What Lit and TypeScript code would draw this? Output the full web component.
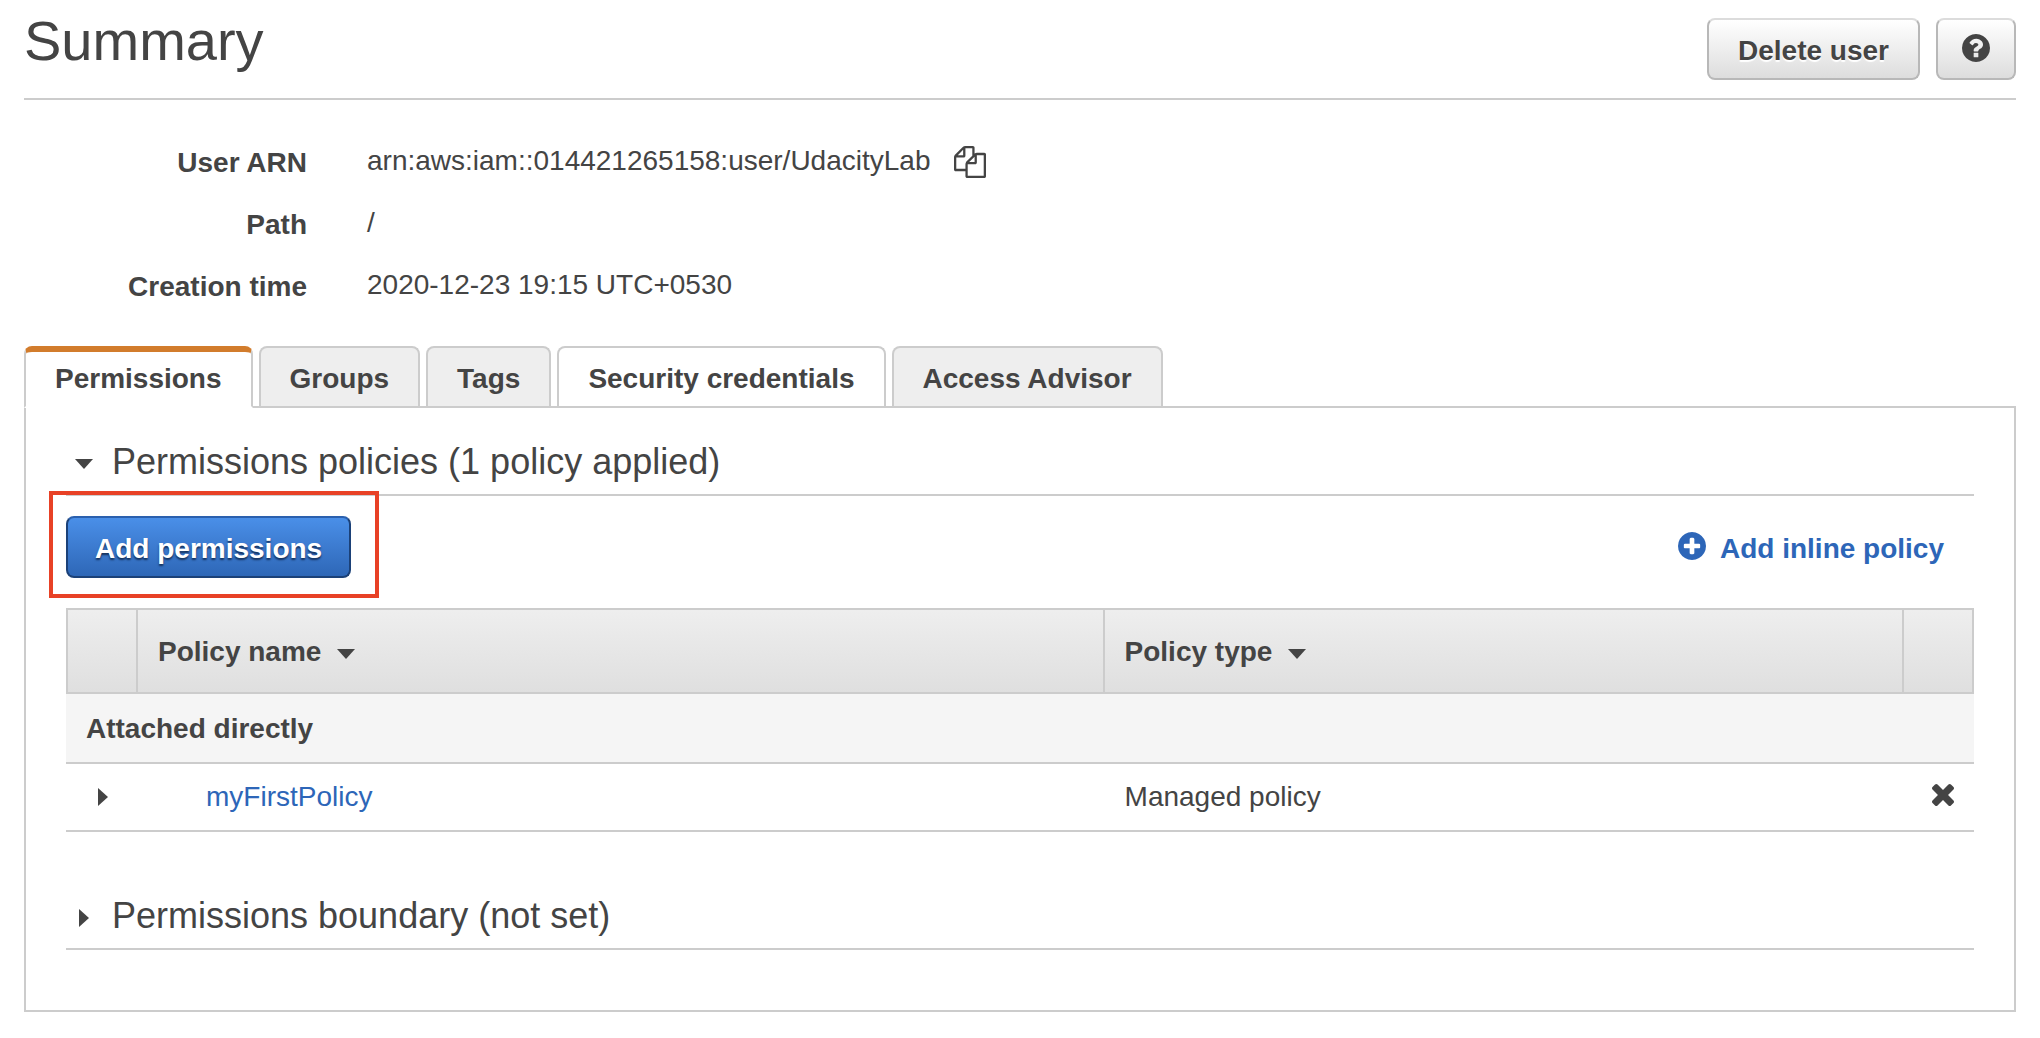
import { LitElement, html, css, svg } from "lit";
import { customElement, property, state } from "lit/decorators.js";
import { classMap } from "lit/directives/class-map.js";

const DISC =
  "q0 209-103 385.500t-279.500 279.500-385.500 103-385.500-103-279.500-279.500-103-385.500 103-385.500 279.500-279.500 385.500-103 385.500 103 279.500 279.500 103 385.500z";

const ICONS: Record<string, { box: string; path: string }> = {
  copy: {
    box: "0 0 1792 1792",
    path: "M1696 384q40 0 68 28t28 68v1216q0 40-28 68t-68 28h-960q-40 0-68-28t-28-68v-288h-544q-40 0-68-28t-28-68v-672q0-40 20-88t48-76l408-408q28-28 76-48t88-20h416q40 0 68 28t28 68v328q68-40 128-40h416zm-544 213l-299 299h299v-299zm-640-384l-299 299h299v-299zm196 647l316-316v-416h-384v416q0 40-28 68t-68 28h-416v640h512v-256q0-40 20-88t48-76zm956 804v-1152h-384v416q0 40-28 68t-68 28h-416v640h896z",
  },
  question: {
    box: "128 128 1536 1536",
    path:
      "M1024 1376v-192q0-14-9-23t-23-9h-192q-14 0-23 9t-9 23v192q0 14 9 23t23 9h192q14 0 23-9t9-23zm256-672q0-88-55.500-163t-138.500-116-170-41q-243 0-371 213-15 24 8 42l132 100q7 6 19 6 16 0 25-12 53-68 86-92 34-24 86-24 48 0 85.500 26t37.500 59q0 38-20 61t-68 45q-63 28-115.500 86.500t-52.500 125.500v36q0 14 9 23t23 9h192q14 0 23-9t9-23q0-19 21.500-49.500t54.500-49.500q32-18 49-28.500t46-35 44.500-48 28-60.500 12.500-81zm384 192" +
      DISC,
  },
  plus: {
    box: "128 128 1536 1536",
    path:
      "M1344 960v-128q0-26-19-45t-45-19h-256v-256q0-26-19-45t-45-19h-128q-26 0-45 19t-19 45v256h-256q-26 0-45 19t-19 45v128q0 26 19 45t45 19h256v256q0 26 19 45t45 19h128q26 0 45-19t19-45v-256h256q26 0 45-19t19-45zm320-64" +
      DISC,
  },
  remove: {
    box: "302 366 1188 1188",
    path: "M1490 1322q0 40-28 68l-136 136q-28 28-68 28t-68-28l-294-294-294 294q-28 28-68 28t-68-28l-136-136q-28-28-28-68t28-68l294-294-294-294q-28-28-28-68t28-68l136-136q28-28 68-28t68 28l294 294 294-294q28-28 68-28t68 28l136 136q28 28 28 68t-28 68l-294 294 294 294q28 28 28 68z",
  },
  down: { box: "0 0 18 18", path: "M0 4h18l-9 10z" },
  right: { box: "0 0 18 18", path: "M4 0v18l10-9z" },
};

const icon = (name: string, size: string) => html`
  <svg class="icon ${size}" viewBox=${ICONS[name].box} aria-hidden="true">
    ${svg`<path d=${ICONS[name].path}></path>`}
  </svg>
`;

const shared = css`
  *,
  *::before {
    box-sizing: border-box;
  }
  button {
    margin: 0;
    padding: 0;
    border: 0;
    background: none;
    font: inherit;
    color: inherit;
    cursor: pointer;
  }
  .icon {
    display: block;
    flex: none;
    fill: currentColor;
  }
  .caret {
    width: 18px;
    height: 18px;
  }
  .cross {
    width: 22px;
    height: 22px;
  }
  .disc {
    width: 28px;
    height: 28px;
  }
  .page {
    width: 32px;
    height: 32px;
  }
`;

@customElement("collapsible-section")
export class CollapsibleSection extends LitElement {
  @property() heading = "";
  @property({ type: Boolean }) open = false;

  static styles = [
    shared,
    css`
      :host {
        display: block;
      }
      .heading {
        margin: 0;
        border-bottom: 2px solid #ccc;
        font-size: 36px;
        font-weight: 400;
        line-height: 42px;
      }
      .toggle {
        display: flex;
        align-items: center;
        gap: 19px;
        width: 100%;
        padding: 9px 9px 11px;
        text-align: left;
      }
      .caret {
        margin-top: 4px;
      }
    `,
  ];

  render() {
    return html`
      <h2 class="heading">
        <button class="toggle" aria-expanded=${this.open} @click=${() => (this.open = !this.open)}>
          ${icon(this.open ? "down" : "right", "caret")}
          <span>${this.heading}</span>
        </button>
      </h2>
      ${this.open ? html`<slot></slot>` : null}
    `;
  }
}

@customElement("policy-table")
export class PolicyTable extends LitElement {
  @property({ attribute: false }) policies: { name: string; type: string }[] = [];

  static styles = [
    shared,
    css`
      :host {
        display: block;
      }
      .table {
        width: 100%;
        table-layout: fixed;
        border-collapse: separate;
        border-spacing: 0;
        text-align: left;
        line-height: 34px;
      }
      .col-expand {
        width: 70px;
      }
      .col-type {
        width: 41.9%;
      }
      .col-remove {
        width: 72px;
      }
      .head {
        height: 86px;
        padding: 2px 20px 0;
        border: 2px solid #ccc;
        border-right-width: 0;
        background: linear-gradient(#eee, #dfdfdf);
        font-weight: 700;
      }
      .head:last-child {
        border-right-width: 2px;
      }
      .sort {
        display: flex;
        align-items: center;
        gap: 16px;
      }
      .sort .caret {
        margin-top: 4px;
      }
      .group {
        height: 70px;
        padding: 2px 20px 0;
        border-bottom: 2px solid #ccc;
        background: #f5f5f5;
        font-weight: 700;
      }
      .cell {
        height: 68px;
        padding: 0 22px;
        border-bottom: 2px solid #ccc;
      }
      .cell.expand {
        padding: 0 28px;
      }
      .cell.name {
        padding-left: 70px;
      }
      .cell.remove .cross {
        margin-left: 8px;
      }
      .link {
        color: #2d66b8;
        text-decoration: none;
      }
    `,
  ];

  render() {
    return html`
      <table class="table">
        <colgroup>
          <col class="col-expand" />
          <col />
          <col class="col-type" />
          <col class="col-remove" />
        </colgroup>
        <thead>
          <tr>
            <th class="head"></th>
            <th class="head" scope="col">
              <button class="sort">Policy name ${icon("down", "caret")}</button>
            </th>
            <th class="head" scope="col">
              <button class="sort">Policy type ${icon("down", "caret")}</button>
            </th>
            <th class="head"></th>
          </tr>
        </thead>
        <tbody>
          <tr>
            <th class="group" colspan="4" scope="rowgroup">Attached directly</th>
          </tr>
          ${this.policies.map(
            (policy) => html`
              <tr>
                <td class="cell expand">
                  <button aria-label="Expand ${policy.name}">${icon("right", "caret")}</button>
                </td>
                <td class="cell name"><a class="link" href="#${policy.name}">${policy.name}</a></td>
                <td class="cell">${policy.type}</td>
                <td class="cell remove">
                  <button aria-label="Detach ${policy.name}">${icon("remove", "cross")}</button>
                </td>
              </tr>
            `,
          )}
        </tbody>
      </table>
    `;
  }
}

@customElement("app-root")
export class AppRoot extends LitElement {
  @state() private selected = "Permissions";

  private tabs = [
    { label: "Permissions" },
    { label: "Groups" },
    { label: "Tags" },
    { label: "Security credentials", highlighted: true },
    { label: "Access Advisor" },
  ];

  private policies = [{ name: "myFirstPolicy", type: "Managed policy" }];

  static styles = [
    shared,
    css`
      :host {
        display: block;
        padding: 0 24px 26px;
        background: #fff;
        color: #444;
        font-family: "Liberation Sans", Arial, Helvetica, sans-serif;
        font-size: 28px;
        line-height: 36px;
      }
      .header {
        display: flex;
        align-items: flex-start;
        justify-content: space-between;
        padding: 18px 0;
        border-bottom: 2px solid #ccc;
      }
      .title {
        margin: 0;
        font-size: 56px;
        font-weight: 400;
        line-height: 46px;
      }
      .actions {
        display: flex;
        gap: 16px;
      }
      .button {
        display: flex;
        align-items: center;
        justify-content: center;
        height: 62px;
        padding: 4px 29px 0;
        border: 2px solid #b8b8b8;
        border-top-color: #dcdcdc;
        border-radius: 8px;
        background: linear-gradient(#fff, #ddd);
        font-weight: 700;
        text-shadow: 0 2px 1px #fff;
      }
      .button.square {
        width: 80px;
        padding: 0 0 2px;
      }
      .button.primary {
        padding: 4px 27px 0;
        border-color: #1b4178;
        border-top-color: #2a60ae;
        background: linear-gradient(#4a8fe8, #2e67b7);
        color: #fff;
        text-shadow: 0 2px 2px #14305a;
      }
      .details {
        display: grid;
        grid-template-columns: 283px 1fr;
        gap: 24px 60px;
        margin: 0;
        padding: 43px 0 41px;
      }
      .term {
        padding-top: 2px;
        font-weight: 700;
        text-align: right;
      }
      .value {
        display: flex;
        gap: 24px;
        margin: 0;
      }
      .copy {
        align-self: center;
      }
      .tabs {
        display: flex;
        gap: 6px;
      }
      .tab {
        height: 60px;
        padding: 4px 29px 0;
        border: 2px solid #ccc;
        border-bottom: 0;
        border-radius: 8px 8px 0 0;
        background: #eee;
        font-weight: 700;
      }
      .tab.highlighted {
        background: #fff;
      }
      .tab.active {
        z-index: 1;
        height: 62px;
        margin-bottom: -2px;
        padding-top: 0;
        border-top: 6px solid #d27c2c;
        border-bottom: 2px solid #fff;
        background: #fff;
      }
      .panel {
        padding: 24px 40px 60px;
        border: 2px solid #ccc;
      }
      .toolbar {
        display: flex;
        align-items: center;
        justify-content: space-between;
        padding: 20px 30px 30px 0;
      }
      .marked {
        position: relative;
      }
      .marked::before {
        content: "";
        position: absolute;
        inset: -25px -28px -20px -17px;
        border: 4px solid #e84126;
        pointer-events: none;
      }
      .inline-policy {
        display: flex;
        align-items: center;
        gap: 14px;
        padding-top: 4px;
        color: #2d66b8;
        font-weight: 700;
        text-decoration: none;
      }
      .inline-policy .disc {
        margin-bottom: 6px;
      }
      .boundary {
        margin-top: 54px;
      }
    `,
  ];

  render() {
    return html`
      <header class="header">
        <h1 class="title">Summary</h1>
        <div class="actions">
          <button class="button">Delete user</button>
          <button class="button square" aria-label="Help">${icon("question", "disc")}</button>
        </div>
      </header>

      <dl class="details">
        <dt class="term">User ARN</dt>
        <dd class="value">
          <span>arn:aws:iam::014421265158:user/UdacityLab</span>
          <button class="copy" aria-label="Copy user ARN">${icon("copy", "page")}</button>
        </dd>
        <dt class="term">Path</dt>
        <dd class="value">/</dd>
        <dt class="term">Creation time</dt>
        <dd class="value">2020-12-23 19:15 UTC+0530</dd>
      </dl>

      <div class="tabs" role="tablist">
        ${this.tabs.map(
          ({ label, highlighted = false }) => html`
            <button
              class=${classMap({ tab: true, highlighted, active: label === this.selected })}
              role="tab"
              aria-selected=${label === this.selected}
              @click=${() => (this.selected = label)}
            >
              ${label}
            </button>
          `,
        )}
      </div>

      <main class="panel" role="tabpanel">
        <collapsible-section heading="Permissions policies (1 policy applied)" open>
          <div class="toolbar">
            <div class="marked"><button class="button primary">Add permissions</button></div>
            <a class="inline-policy" href="#inline-policy">${icon("plus", "disc")} Add inline policy</a>
          </div>
          <policy-table .policies=${this.policies}></policy-table>
        </collapsible-section>
        <collapsible-section class="boundary" heading="Permissions boundary (not set)"></collapsible-section>
      </main>
    `;
  }
}
